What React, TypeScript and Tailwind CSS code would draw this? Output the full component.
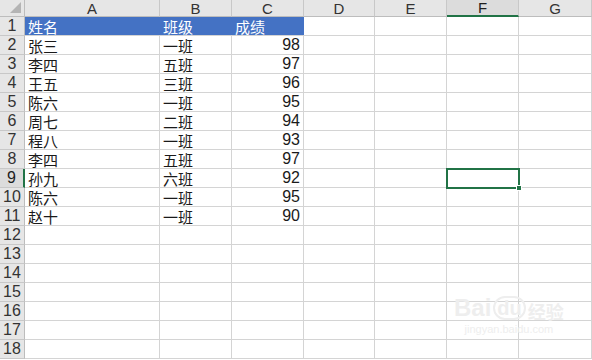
const COLS = ["A", "B", "C", "D", "E", "F", "G"];

const DATA: [string, string, string][] = [
  ["姓名", "班级", "成绩"],
  ["张三", "一班", "98"],
  ["李四", "五班", "97"],
  ["王五", "三班", "96"],
  ["陈六", "一班", "95"],
  ["周七", "二班", "94"],
  ["程八", "一班", "93"],
  ["李四", "五班", "97"],
  ["孙九", "六班", "92"],
  ["陈六", "一班", "95"],
  ["赵十", "一班", "90"],
];

const cjk = { fontFamily: '"Noto Sans CJK SC", "Liberation Sans", sans-serif' };

export default function App() {
  const rows = Array.from({ length: 18 }, (_, i) => i + 1);

  return (
    <div className="relative w-[592px] h-[360px] overflow-hidden bg-white text-[#1a1a1a]" style={cjk}>
      <div className="grid grid-cols-[25px_135px_72px_72px_71px_72px_72px_73px] grid-rows-[17px_repeat(18,19px)]">
        {/* corner */}
        <div className="relative bg-[#e6e6e6] border-r border-b border-[#bdbdbd]">
          <div className="absolute right-[3px] bottom-[3px] w-0 h-0 border-l-[11px] border-l-transparent border-b-[11px] border-b-[#b4b4b4]" />
        </div>
        {COLS.map((c) => (
          <div
            key={c}
            className={`flex items-center justify-center text-[15px] leading-none font-['Liberation_Sans'] border-r border-[#c8c8c8] ${
              c === "F"
                ? "bg-[#dcdcdc] border-b-2 border-b-[#217346] text-[#1e1e1e]"
                : "bg-[#e6e6e6] border-b border-b-[#bdbdbd] text-[#333]"
            }`}
          >
            {c}
          </div>
        ))}

        {rows.map((r) => {
          const d = DATA[r - 1];
          return [
            <div
              key={`h${r}`}
              className={`flex items-center justify-center text-[16px] leading-none font-['Liberation_Sans'] border-b border-[#c8c8c8] ${
                r === 9
                  ? "bg-[#dcdcdc] border-r-2 border-r-[#217346] text-[#1e1e1e]"
                  : "bg-[#e6e6e6] border-r border-r-[#bdbdbd] text-[#333]"
              }`}
            >
              {r}
            </div>,
            ...COLS.map((c, ci) => {
              const header = r === 1 && ci < 3;
              let text = "";
              if (d && ci < 3) text = d[ci];
              const num = ci === 2 && r > 1 && d;
              return (
                <div
                  key={`${c}${r}`}
                  className={`flex items-center px-[3px] text-[15px] leading-none ${
                    num ? "justify-end font-['Liberation_Sans'] text-[16px]" : ""
                  } ${
                    header
                      ? "bg-[#4472c4] text-white border-b border-[#d4d4d4]"
                      : "border-r border-b border-[#d4d4d4]"
                  }`}
                >
                  {text}
                </div>
              );
            }),
          ];
        })}
      </div>

      {/* active cell F9 */}
      <div className="absolute left-[446px] top-[168px] w-[74px] h-[21px] border-2 border-[#217346]" />
      <div className="absolute left-[516px] top-[185px] w-[6px] h-[6px] bg-[#217346] border border-white" />

      {/* watermark */}
      <div className="absolute left-[454px] top-[296px] flex flex-col items-center pointer-events-none text-[#eeeeee]">
        <div className="flex items-end gap-[2px] leading-none">
          <span className="text-[24px] font-bold font-['Liberation_Sans']">Bai</span>
          <span className="text-[20px] font-bold font-['Liberation_Sans'] border-2 border-[#eeeeee] rounded-full px-[2px]">du</span>
          <span className="text-[18px] font-bold" style={cjk}>经验</span>
        </div>
        <span className="text-[11px] leading-tight font-['Liberation_Sans'] mt-[3px]">jingyan.baidu.com</span>
      </div>
    </div>
  );
}
